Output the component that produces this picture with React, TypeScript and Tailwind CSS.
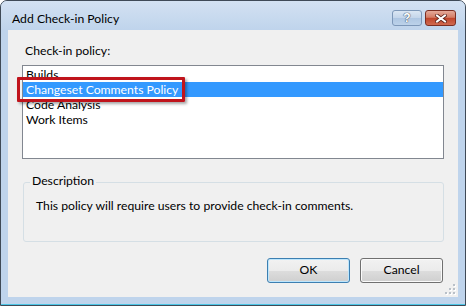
import React from 'react';

// Windows 7 (Aero Basic) style "Add Check-in Policy" dialog.

const POLICIES = ['Builds', 'Changeset Comments Policy', 'Code Analysis', 'Work Items'];
const SELECTED = 1;

function HelpButton() {
  return (
    <div className="w-[30px] h-[16px] rounded-[3px] border border-[#7d97b8] bg-[linear-gradient(#dbe6f3_0%,#c3d5ea_50%,#aec6e2_51%,#bcd2ea_100%)] flex items-center justify-center">
      <span className="text-[12px] leading-[12px] font-bold text-white font-[Arial,'Liberation_Sans',sans-serif] [text-shadow:0_0_1px_#4d5d73,0_0_1px_#4d5d73,0_0_1px_#4d5d73]">
        ?
      </span>
    </div>
  );
}

function CloseButton() {
  return (
    <div className="w-[31px] h-[16px] rounded-[3px] border border-[#7b2e22] bg-[linear-gradient(#e5a999_0%,#d47d66_45%,#c0452b_52%,#cf6a50_100%)] flex items-center justify-center">
      <svg width="12" height="9" viewBox="0 0 12 9">
        <path d="M2 1.5 L10 7.5 M10 1.5 L2 7.5" stroke="#5a1f17" strokeWidth="3.6" strokeLinecap="square" />
        <path d="M2 1.5 L10 7.5 M10 1.5 L2 7.5" stroke="#ffffff" strokeWidth="2" strokeLinecap="square" />
      </svg>
    </div>
  );
}

function PolicyList() {
  return (
    <div className="relative w-full h-[94px] bg-white border border-[#828790] pt-[1px]">
      {POLICIES.map((name, i) => (
        <div
          key={name}
          className={`h-[15px] leading-[15px] pl-[3px] text-[12.2px] ${
            i === SELECTED ? 'bg-[#3399ff] text-white' : 'text-black'
          }`}
        >
          {name}
        </div>
      ))}
      {/* callout drawn over the selected item */}
      <div className="absolute left-[-6px] top-[11px] w-[168px] h-[25px] border-[3px] border-[#c0141c] rounded-[1px] shadow-[2px_2px_3px_rgba(0,0,0,0.35)]"></div>
    </div>
  );
}

function DescriptionGroup() {
  return (
    <div className="relative ml-[1px] h-[60px] border border-[#d5dfe5] rounded-[3px] pt-[15px] pl-[12px]">
      <span className="absolute -top-[9px] left-[6px] px-[2px] bg-[#f0f0f0] text-[12.2px] leading-[14px] text-black">
        Description
      </span>
      <p className="text-[12.2px] leading-[16px] text-black">
        This policy will require users to provide check-in comments.
      </p>
    </div>
  );
}

function DialogButton({ label, isDefault }: { label: string; isDefault?: boolean }) {
  return (
    <button
      className={`w-[83px] h-[25px] rounded-[3px] border text-[12.2px] text-black bg-[linear-gradient(#f2f2f2_0%,#ebebeb_50%,#dddddd_51%,#cfcfcf_100%)] ${
        isDefault ? 'border-[#3c7fb1] shadow-[inset_0_0_0_1px_#bde6fd]' : 'border-[#707070] shadow-[inset_0_0_0_1px_#fafafa]'
      }`}
    >
      {label}
    </button>
  );
}

function ResizeGrip() {
  const dots = [
    [8, 0],
    [4, 4],
    [8, 4],
    [0, 8],
    [4, 8],
    [8, 8],
  ];
  return (
    <svg width="11" height="11" viewBox="0 0 11 11" className="absolute right-[2px] bottom-[2px]">
      {dots.map(([x, y], i) => (
        <g key={i}>
          <rect x={x + 1} y={y + 1} width="2" height="2" fill="#ffffff" />
          <rect x={x} y={y} width="2" height="2" fill="#b9c0c8" />
        </g>
      ))}
    </svg>
  );
}

export default function App() {
  return (
    <div className="w-[466px] h-[306px] bg-white font-[Lato,'Liberation_Sans',sans-serif]">
      <div className="w-[466px] h-[306px] flex flex-col border border-[#3f4a57] rounded-t-[7px] bg-[#bfd4ec] shadow-[inset_0_-1px_0_#4cc6e6] px-[7px]">
        {/* title bar */}
        <div className="h-[29px] flex items-start bg-[linear-gradient(#d3e1f2,#bfd4ec)] -mx-[7px] pl-[11px] pr-[9px] rounded-t-[6px]">
          <span className="mt-[9px] text-[12.2px] leading-[18px] text-black">Add Check-in Policy</span>
          <div className="ml-auto mt-[9px] flex gap-[3px]">
            <HelpButton />
            <CloseButton />
          </div>
        </div>

        {/* client area */}
        <div className="relative w-[450px] h-[267px] bg-[#f0f0f0] px-[14px] pt-[13px] flex flex-col">
          <span className="ml-[3px] text-[12.2px] leading-[16px] text-black">Check-in policy:</span>
          <div className="mt-[6px]">
            <PolicyList />
          </div>
          <div className="mt-[23px]">
            <DescriptionGroup />
          </div>
          <div className="mt-[16px] flex justify-end gap-[10px] mr-[1px]">
            <DialogButton label="OK" isDefault />
            <DialogButton label="Cancel" />
          </div>
          <ResizeGrip />
        </div>
      </div>
    </div>
  );
}
